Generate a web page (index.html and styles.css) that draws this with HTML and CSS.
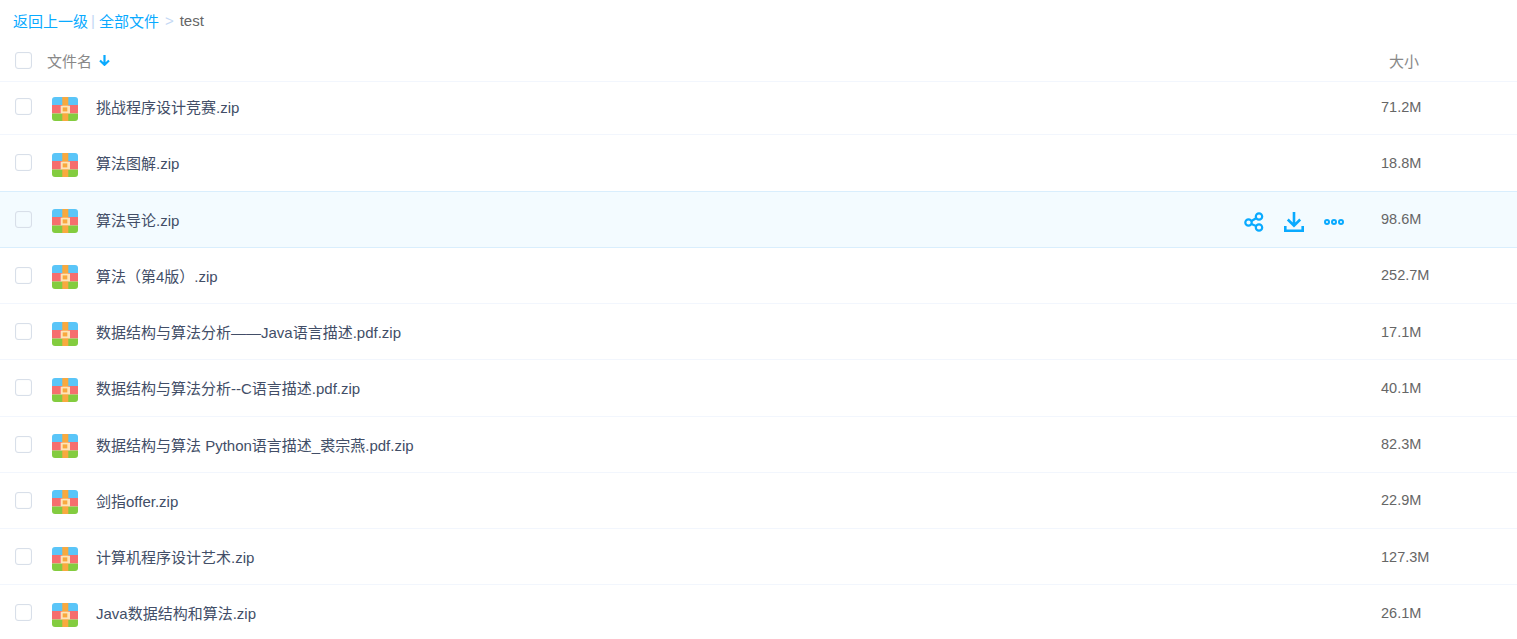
FILE: index.html
```html
<!DOCTYPE html>
<html lang="zh-CN">
<head>
    <meta charset="UTF-8">
    <title>全部文件</title>
    <link rel="stylesheet" href="styles.css">
</head>
<body>

<!-- Breadcrumb -->
<div class="crumbs">
    <a href="#">返回上一级</a>
    <span class="crumb-bar">|</span>
    <a href="#">全部文件</a>
    <span class="crumb-sep">&gt;</span>
    <span class="crumb-now">test</span>
</div>

<!-- Column header -->
<div class="list-head">
    <div class="check"></div>
    <div class="head-name">文件名
        <svg class="sort-icon" width="11" height="11" viewBox="0 0 11 11"><path d="M5.500 0v9.500M1 5.500l4.500 4.300L10 5.500" fill="none" stroke="#09aaff" stroke-width="2.200"/></svg>
    </div>
    <div class="head-size">大小</div>
</div>

<!-- File rows -->
<div class="file-row">
    <div class="check"></div>
    <svg class="zip-icon" viewBox="0 0 26 24"><use href="#zip"/></svg>
    <div class="file-name">挑战程序设计竞赛.zip</div>
    <div class="file-size">71.2M</div>
</div>
<div class="file-row">
    <div class="check"></div>
    <svg class="zip-icon" viewBox="0 0 26 24"><use href="#zip"/></svg>
    <div class="file-name">算法图解.zip</div>
    <div class="file-size">18.8M</div>
</div>
<div class="file-row active">
    <div class="check"></div>
    <svg class="zip-icon" viewBox="0 0 26 24"><use href="#zip"/></svg>
    <div class="file-name">算法导论.zip</div>
    <div class="row-actions">
        <svg width="20" height="20" viewBox="0 0 20 20" fill="none" stroke="#09aaff" stroke-width="2.200"><circle cx="4.500" cy="10.500" r="3.200"/><circle cx="15" cy="4.500" r="3.200"/><circle cx="15" cy="15.500" r="3.200"/><path d="M7.500 9 12 6.200M7.500 12 12 14"/></svg>
        <svg width="20" height="20" viewBox="0 0 20 20" fill="none" stroke="#09aaff" stroke-width="2.600"><path d="M10 0v13.500M3.800 7.500l6.200 6.200 6.200-6.200"/><path d="M1.300 14v4.700h17.400V14"/></svg>
        <svg width="20" height="20" viewBox="0 0 20 20" fill="none" stroke="#09aaff" stroke-width="2"><circle cx="3" cy="10" r="2"/><circle cx="10" cy="10" r="2"/><circle cx="17" cy="10" r="2"/></svg>
    </div>
    <div class="file-size">98.6M</div>
</div>
<div class="file-row">
    <div class="check"></div>
    <svg class="zip-icon" viewBox="0 0 26 24"><use href="#zip"/></svg>
    <div class="file-name">算法（第4版）.zip</div>
    <div class="file-size">252.7M</div>
</div>
<div class="file-row">
    <div class="check"></div>
    <svg class="zip-icon" viewBox="0 0 26 24"><use href="#zip"/></svg>
    <div class="file-name">数据结构与算法分析——Java语言描述.pdf.zip</div>
    <div class="file-size">17.1M</div>
</div>
<div class="file-row">
    <div class="check"></div>
    <svg class="zip-icon" viewBox="0 0 26 24"><use href="#zip"/></svg>
    <div class="file-name">数据结构与算法分析--C语言描述.pdf.zip</div>
    <div class="file-size">40.1M</div>
</div>
<div class="file-row">
    <div class="check"></div>
    <svg class="zip-icon" viewBox="0 0 26 24"><use href="#zip"/></svg>
    <div class="file-name">数据结构与算法 Python语言描述_裘宗燕.pdf.zip</div>
    <div class="file-size">82.3M</div>
</div>
<div class="file-row">
    <div class="check"></div>
    <svg class="zip-icon" viewBox="0 0 26 24"><use href="#zip"/></svg>
    <div class="file-name">剑指offer.zip</div>
    <div class="file-size">22.9M</div>
</div>
<div class="file-row">
    <div class="check"></div>
    <svg class="zip-icon" viewBox="0 0 26 24"><use href="#zip"/></svg>
    <div class="file-name">计算机程序设计艺术.zip</div>
    <div class="file-size">127.3M</div>
</div>
<div class="file-row">
    <div class="check"></div>
    <svg class="zip-icon" viewBox="0 0 26 24"><use href="#zip"/></svg>
    <div class="file-name">Java数据结构和算法.zip</div>
    <div class="file-size">26.1M</div>
</div>

<!-- Shared zip icon -->
<svg class="icon-defs" width="0" height="0">
    <defs>
        <clipPath id="zip-clip"><rect x="0" y="0" width="26" height="24" rx="3"/></clipPath>
        <g id="zip">
            <g clip-path="url(#zip-clip)">
                <rect width="26" height="8" fill="#5ac5f8"/>
                <rect y="8" width="26" height="8.500" fill="#f66e6e"/>
                <rect y="16.500" width="26" height="7.500" fill="#83cc3f"/>
                <rect x="10.300" width="6" height="24" fill="#f8a93f"/>
                <rect x="8.700" y="8.700" width="9.300" height="7.600" fill="#fde3b8"/>
                <rect x="10.700" y="10.400" width="4.600" height="4" fill="#f8a93f"/>
            </g>
        </g>
    </defs>
</svg>

</body>
</html>
```

FILE: styles.css
```css
/* Page */
html, body {
    height: 100%;
    overflow: hidden;
}
body {
    margin: 0;
    font-family: "Liberation Sans", Arial, "Noto Sans CJK SC", sans-serif;
    font-size: 15px;
    color: #424e67;
    background-color: #fff;
}

/* Breadcrumb */
.crumbs {
    display: flex;
    align-items: center;
    height: 40px;
    padding-left: 13px;
    color: #666;
}
.crumbs a {
    color: #09aaff;
    text-decoration: none;
}
.crumb-bar {
    margin: 0 4px 0 3px;
    color: #c4d8f4;
}
.crumb-sep {
    margin: 0 6px;
    color: #c4d8f4;
}

/* Column header, its bottom line sits over the top of the first row */
.list-head {
    display: flex;
    align-items: center;
    box-sizing: border-box;
    height: 42px;
    margin-bottom: -3px;
    border-bottom: 1px solid #f2f6fd;
    color: #888;
}
.list-head .check {
    margin-right: 15px;
}
.head-name {
    flex: 1;
    display: flex;
    align-items: center;
    gap: 7px;
}
.head-size {
    width: 128px;
}

.check {
    box-sizing: border-box;
    flex: none;
    width: 17px;
    height: 17px;
    margin-left: 15px;
    border: 1px solid #d8dfe9;
    border-radius: 3px;
    box-shadow: inset 0 0 1px #dfe4ec;
}

/* File rows */
.file-row {
    display: flex;
    align-items: center;
    box-sizing: border-box;
    height: 56.25px;
    border-bottom: 1px solid #f2f6fd;
}
.file-row.active {
    background-color: #f3fbff;
    border-bottom-color: #d9eefd;
    box-shadow: 0 -1px 0 #d9eefd;
}
.zip-icon {
    flex: none;
    width: 26px;
    height: 24px;
    margin: 4px 18px 0 20px;
}
.file-name {
    flex: 1;
}
.row-actions {
    display: flex;
    gap: 20px;
    margin: 5px 37px 0 0;
}
.file-size {
    width: 136px;
    font-size: 14.500px;
    color: #666;
}
.icon-defs {
    position: absolute;
}
```
